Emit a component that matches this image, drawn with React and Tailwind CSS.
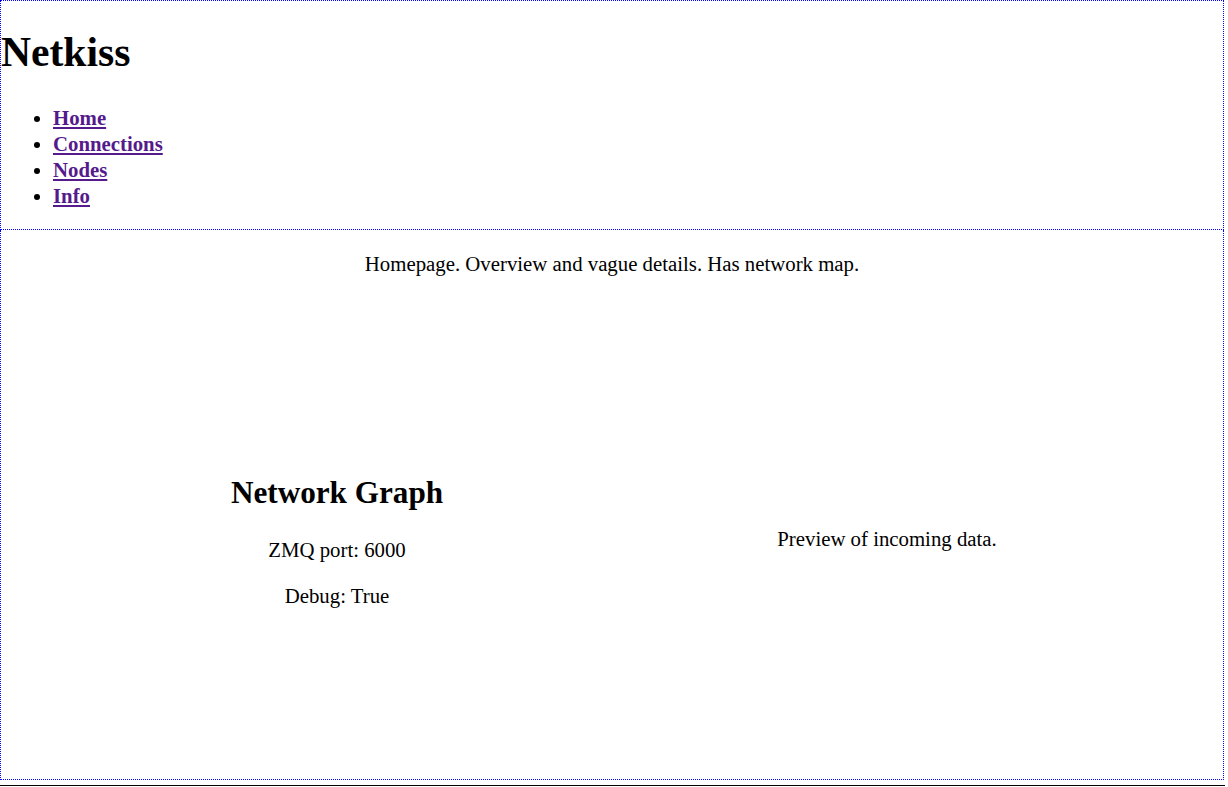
import React from 'react';

const links = ['Home', 'Connections', 'Nodes', 'Info'];

const App = () => {
  return (
    <div className="font-['Liberation_Serif',serif] text-black bg-white min-h-screen">
      <div className="w-[1224px]">
        {/* Header */}
        <div className="border border-dotted border-[#0000ff]">
          <h1 className="text-[41.6px] font-bold leading-[1.15] mt-[27.9px] mb-[27.9px]">Netkiss</h1>
          <ul className="list-disc pl-[52px] text-[20.8px] leading-[26px] mb-[20.8px]">
            {links.map((l) => (
              <li key={l}>
                <a href="#" className="font-bold underline text-[#551a8b]">{l}</a>
              </li>
            ))}
          </ul>
        </div>

        {/* Main */}
        <div className="border-x border-b border-dotted border-[#0000ff] h-[550px] flex flex-col text-[20.8px] leading-[25px]">
          <p className="text-center mt-[21px] mb-[20.8px] leading-[26px]">Homepage. Overview and vague details. Has network map.</p>
          <div className="flex-1 flex justify-center items-center">
            <div className="w-[550px] text-center">
              <h2 className="text-[31.2px] font-bold leading-[36px] my-[25.9px]">Network Graph</h2>
              <p className="my-[20.8px]">ZMQ port: 6000</p>
              <p className="my-[20.8px]">Debug: True</p>
            </div>
            <div className="w-[550px] text-center">
              <p className="my-[20.8px]">Preview of incoming data.</p>
            </div>
          </div>
        </div>
      </div>
      <div className="w-[1225px] mt-[5px] border-t border-black" />
    </div>
  );
};

export default App;
